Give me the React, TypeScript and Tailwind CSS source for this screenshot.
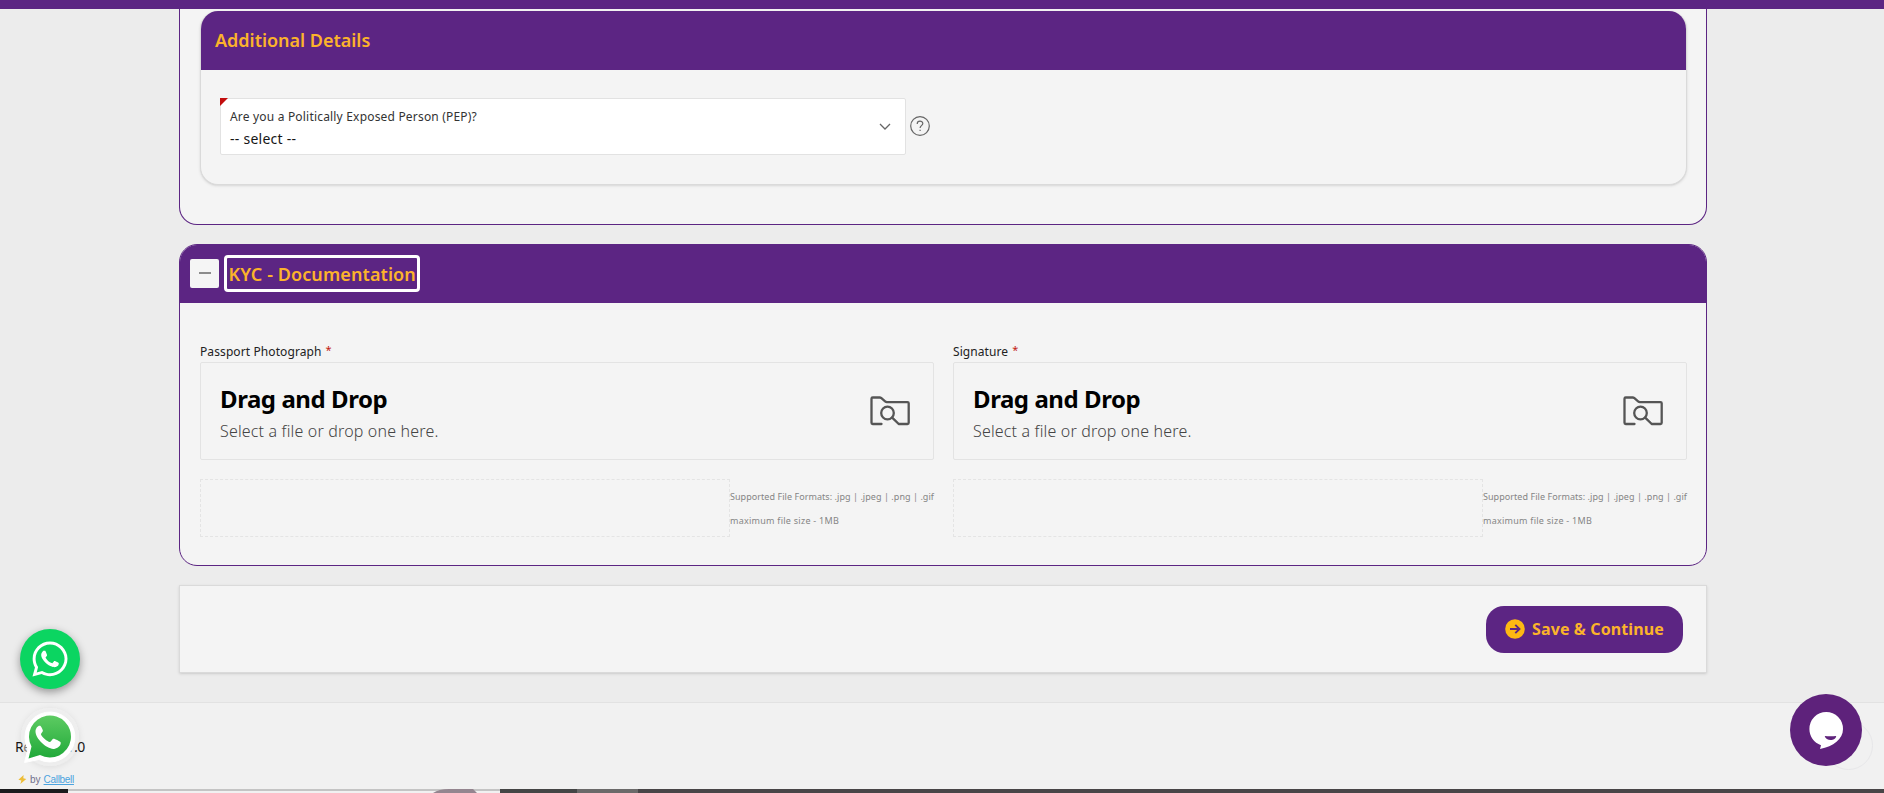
import { FaWhatsapp } from "react-icons/fa";

function FolderSearchIcon() {
  return (
    <svg width="40" height="30" viewBox="0 0 40 30" fill="none" stroke="#555" strokeWidth="2.3" strokeLinecap="round" strokeLinejoin="round">
      <path d="M11.5 28H2.7Q1.5 28 1.5 26.8V2.7Q1.5 1.5 2.7 1.5H9.6q1 0 1.8.7l3.7 3.2q.8.7 1.8.7H37.5q1.2 0 1.2 1.2V26.8q0 1.2-1.2 1.2H28.7L22.2 21.6" />
      <circle cx="17.5" cy="17" r="6.3" />
    </svg>
  );
}

function Upload({ label, labelClass }: { label: string; labelClass: string }) {
  return (
    <div className="w-[734px]">
      <div className="flex h-5 items-center text-xs text-[#222]">
        <span className={labelClass}>{label}</span>
        <span className="-mt-1 ml-1 text-[11px] text-[#c2200f]">*</span>
      </div>
      <div className="flex h-[98px] items-center justify-between rounded-[2px] border border-[#e3e3e3] pr-[23px] pl-[19px]">
        <div className="pt-1">
          <h3 className="text-2xl leading-8 font-bold tracking-[-0.44px] text-black">Drag and Drop</h3>
          <p className="mt-1 text-base leading-6 font-light tracking-[0.17px] text-[#444]">Select a file or drop one here.</p>
        </div>
        <FolderSearchIcon />
      </div>
      <div className="mt-[19px] flex h-[58px]">
        <div className="w-[530px] border border-dashed border-[#e4e4e4]" />
        <div className="flex flex-col justify-center pt-0.5 text-[9px] leading-6 whitespace-nowrap text-[#858585]">
          <p className="tracking-[0.055px]">Supported File Formats: .jpg | .jpeg | .png | .gif</p>
          <p className="tracking-[0.26px]">maximum file size - 1MB</p>
        </div>
      </div>
    </div>
  );
}

function PersonDetails() {
  return (
    <section className="h-[216px] rounded-b-[18px] border border-t-0 border-[#5c2583] bg-[#f4f4f4] pt-0.5 pr-[19px] pl-5">
      <div className="h-[174px] overflow-hidden rounded-[18px] border border-t-0 border-[#dadada] bg-[#f4f4f4] shadow-sm">
        <div className="flex h-[59px] items-center bg-[#5c2583] pb-0.5 pl-3.5">
          <h2 className="text-lg font-semibold tracking-[-0.02px] text-[#fbb32b]">Additional Details</h2>
        </div>
        <div className="flex items-start pt-7 pl-[19px]">
          <div className="relative flex h-[57px] w-[686px] items-center justify-between rounded-[2px] border border-[#e2e2e2] bg-white pr-3.5 pl-[9px]">
            <div className="absolute top-[-1px] left-[-1px] h-2 w-2 bg-[#c20d0d] [clip-path:polygon(0_0,100%_0,0_100%)]" />
            <div>
              <p className="pt-1 text-xs leading-5 tracking-[0.188px] text-[#333]">Are you a Politically Exposed Person (PEP)?</p>
              <p className="text-[14px] leading-6 tracking-[0.26px] text-[#161616]">-- select --</p>
            </div>
            <svg width="12" height="8" viewBox="0 0 12 8" fill="none" stroke="#666" strokeWidth="1.3">
              <path d="M1 1l5 5 5-5" />
            </svg>
          </div>
          <svg className="mt-[17px] ml-[3px]" width="22" height="22" viewBox="0 0 22 22" fill="none" stroke="#666" strokeWidth="1.2">
            <circle cx="11" cy="11" r="9.3" />
            <path d="M8.2 8.9c0-3.8 5.6-3.6 5.6-.3 0 2-2.7 2.1-2.7 4.3" />
            <path d="M11.1 14.7v1.4" />
          </svg>
        </div>
      </div>
    </section>
  );
}

function Kyc() {
  return (
    <section className="mt-[19px] h-[322px] overflow-hidden rounded-[18px] border border-[#5c2583] bg-[#f4f4f4]">
      <div className="flex h-[58px] items-center gap-[5px] bg-[#5c2583] pb-0.5 pl-2.5">
        <button className="flex size-[29px] items-center justify-center rounded-[2px] bg-[#f5f5f5]">
          <span className="h-0.5 w-3 bg-[#8c8c8c]" />
        </button>
        <h2 className="flex h-[37px] w-[196px] items-center rounded-[4px] border-[3px] border-white pt-0.5 pl-[1.5px] text-lg font-semibold tracking-[0.09px] whitespace-nowrap text-[#fbb32b]">KYC - Documentation</h2>
      </div>
      <div className="flex gap-[19px] pt-[39px] pl-5">
        <Upload label="Passport Photograph" labelClass="tracking-[0.1px]" />
        <Upload label="Signature" labelClass="tracking-[0.08px]" />
      </div>
    </section>
  );
}

function Actions() {
  return (
    <section className="mt-[19px] flex h-[88px] items-center justify-end border border-[#dadada] bg-[#f4f4f4] pr-[23px] shadow-sm">
      <button className="flex h-[47px] w-[197px] items-center gap-[7px] rounded-[18px] bg-[#5c2583] pl-[19px] text-base font-bold tracking-[0.12px] whitespace-nowrap text-[#fbb32b]">
        <svg width="20" height="20" viewBox="0 0 20 20" fill="none">
          <circle cx="10" cy="10" r="9.8" fill="#fdb913" />
          <path d="M5 10h9.5M10.3 5.8l4.2 4.2-4.2 4.2" stroke="#5c2583" strokeWidth="1.9" />
        </svg>
        Save &amp; Continue
      </button>
    </section>
  );
}

function CallBubble() {
  return (
    <svg className="absolute top-[702px] left-3" width="76" height="76" viewBox="-2 0 76 76">
      <defs>
        <linearGradient id="bubble" x1="0" y1="0" x2="0" y2="1">
          <stop offset="0" stopColor="#5dcb62" />
          <stop offset="1" stopColor="#20a939" />
        </linearGradient>
        <filter id="glow" x="-20%" y="-20%" width="140%" height="140%">
          <feDropShadow dx="0" dy="1" stdDeviation="3" floodOpacity="0.2" />
        </filter>
      </defs>
      <circle cx="36" cy="35" r="29" fill="#f1f1f1" fillOpacity="0.45" filter="url(#glow)" />
      <g transform="translate(-2 0)">
        <path d="M12.5 60.5l3.5-13.5A25 25 0 1 1 27 57.5z" fill="#fff" stroke="#fff" strokeWidth="1" strokeLinejoin="round" />
        <path d="M16.5 56.5l3-12A21 21 0 1 1 28 53z" fill="url(#bubble)" />
        <path d="M27.5 23.8c-1.5 0-4 2.2-4 5.8 0 7.7 12.8 19 19.4 17.1 3.7-.9 6.1-3.3 5.8-6.2-.1-1.2-6.4-4.2-7.5-3.8-1.2.5-2.5 3.5-3.6 3.4-1.8-.3-8.2-5.2-8.7-7.8 0-1 2.2-2.2 2-3.7-.1-1-1.9-4.4-2.4-4.7-.3-.2-.6-.1-1-.1z" fill="#fff" />
      </g>
    </svg>
  );
}

function BottomStrip() {
  return (
    <div className="flex h-1">
      <div className="w-[68px] bg-[#1b1b1d]" />
      <div className="flex w-[432px] items-end border-t-2 border-[#c4c4c4] bg-[#f1f1f1]">
        <svg className="-mt-0.5 ml-[365px]" width="44" height="4" viewBox="0 0 44 4">
          <path d="M0 4Q6 0 16 0H40L44 4z" fill="#94858f" />
        </svg>
      </div>
      <div className="w-[77px] bg-[#444545]" />
      <div className="w-[61px] bg-[#6b6a6a]" />
      <div className="flex-1 bg-[#484547]" />
    </div>
  );
}

export default function App() {
  return (
    <div className="relative flex h-[793px] w-[1884px] flex-col overflow-hidden bg-[#ececec] font-['Noto_Sans',sans-serif]">
      <header className="h-[9px] shrink-0 bg-[#5c2583]" />
      <main className="ml-[179px] h-[693px] w-[1528px] shrink-0">
        <PersonDetails />
        <Kyc />
        <Actions />
      </main>
      <footer className="h-[87px] shrink-0 border-t border-[#e2e2e2] bg-[#f1f1f1] pt-8 pl-[15px]">
        <p className="text-[14px] leading-6 tracking-[-0.36px] text-[#161616]">Release 1.0</p>
        <p className="mt-3.5 flex h-3 items-center pl-[3px] font-['Liberation_Sans',sans-serif] text-[10px] whitespace-nowrap text-[#70708c]">
          <svg className="mr-[3px]" width="9" height="9" viewBox="0 0 9 9">
            <path d="M5.6 0L.4 4.7l3 .8L2.3 9l6-5.1-3-.7z" fill="#edbd37" />
          </svg>
          by
          <a className="ml-[3px] tracking-[-0.3px] text-[#4ba3df] underline">Callbell</a>
        </p>
      </footer>
      <BottomStrip />
      <div className="absolute top-[629px] left-5 flex size-[60px] items-center justify-center rounded-full bg-[#0bd561] shadow-[0_3px_9px_rgba(0,0,0,0.38)]">
        <FaWhatsapp className="size-10 text-white" />
      </div>
      <CallBubble />
      <div className="absolute top-[721px] left-[1824px] size-[49px] rounded-full border border-[#e7e7e9]" />
      <svg className="absolute top-[694px] left-[1790px]" width="72" height="72" viewBox="0 0 72 72">
        <circle cx="36" cy="36" r="36" fill="#5e227b" />
        <path d="M36.2 18A16.7 16.7 0 0 1 53 35C53 45 43.5 52.5 30 55L31 51.2C24 48.8 19.4 42.3 19.4 35A16.8 16.8 0 0 1 36.2 18z" fill="#fff" />
        <path d="M34.7 42q5.5.7 11.5 0c-.5 5.2-10.3 5.5-11.5 0z" fill="#5e227b" />
      </svg>
    </div>
  );
}
